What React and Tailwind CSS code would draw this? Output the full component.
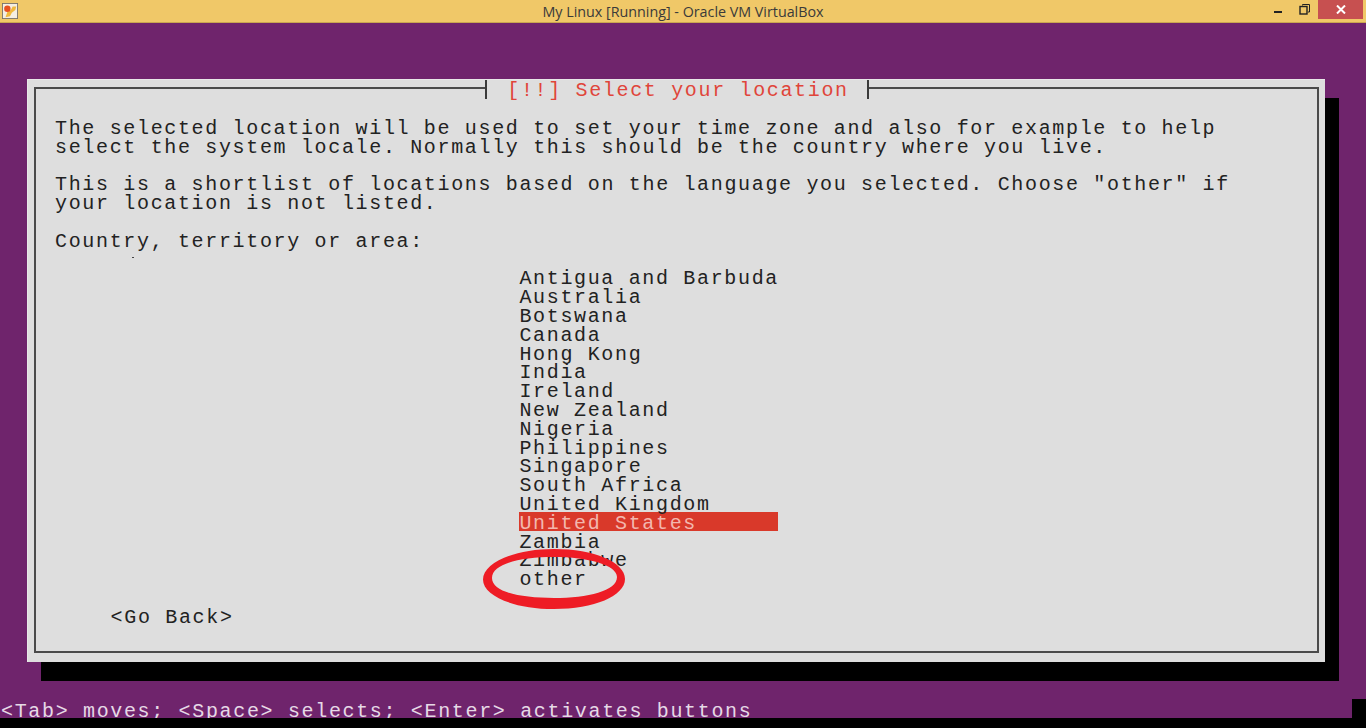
const mono = "font-['Liberation_Mono',monospace]";
const countries = ["Antigua and Barbuda","Australia","Botswana","Canada","Hong Kong","India","Ireland","New Zealand","Nigeria","Philippines","Singapore","South Africa","United Kingdom","United States","Zambia","Zimbabwe","other"];

function AppIcon() {
  return (
    <svg width="16" height="16" viewBox="0 0 18 18" className="mt-[3px]">
      <rect x="0.5" y="0.5" width="17" height="17" fill="#f4eee2" stroke="#77716a" />
      <path d="M4 16 L6 10 L10 8 L12 4 L16 4 L15 8 L11 11 L9 15 Z" fill="#f0b93c" />
      <circle cx="6" cy="6.5" r="3.6" fill="#e8501f" />
    </svg>
  );
}

export default function App() {
  return (
    <div className={`w-[1366px] h-[728px] overflow-hidden flex flex-col bg-[#6f246c] relative ${mono} text-[20px] leading-[18.8px] tracking-[1.66px]`}>
      <header className="h-[23px] shrink-0 bg-[#f0c868] border-b border-[#c9a650] flex tracking-normal">
        <div className="w-[98px] pl-[2px]"><AppIcon /></div>
        <div className="flex-1 text-center font-['Open_Sans',sans-serif] text-[14.3px] leading-[23px] text-[#3a3a3a]">My Linux [Running] - Oracle VM VirtualBox</div>
        <div className="flex w-[95px] mr-[3px] h-[19px]">
          <div className="w-[20px] flex items-start justify-center">
            <div className="w-[8px] h-[2px] mt-[11px] bg-[#222]" />
          </div>
          <svg width="12" height="12" viewBox="0 0 12 12" className="mt-[3px] ml-[11px] mr-[7px]">
            <path d="M3.5 2.5V1.5H10.5V9H9" fill="none" stroke="#222" />
            <rect x="1" y="3.5" width="7" height="7.5" fill="none" stroke="#222" strokeWidth="1.4" />
          </svg>
          <div className="w-[45px] bg-[#c75050] flex items-center justify-center">
            <svg width="10" height="9" viewBox="0 0 10 9"><path d="M1 0.5L9 8.5M9 0.5L1 8.5" stroke="#fff" strokeWidth="2" /></svg>
          </div>
        </div>
      </header>

      <main className="flex-1 pt-[56px] pl-[27px] flex flex-col">
        <section className="w-[1298px] h-[583px] bg-[#dedede] shadow-[14px_19px_0_#000] border-t border-l border-[#e8e8e8] pt-[7px] pr-[6px] pb-[9px] pl-[6px] flex relative">
          <div className="flex-1 border-2 border-[#4a4a4a] pl-[19px] pt-[31px] text-[#222] whitespace-pre">
            <div>The selected location will be used to set your time zone and also for example to help</div>
            <div>select the system locale. Normally this should be the country where you live.</div>
            <div className="mt-[18.8px]">This is a shortlist of locations based on the language you selected. Choose "other" if</div>
            <div>your location is not listed.</div>
            <div className="mt-[18.8px]">Country, territory or area:</div>
            <ul className="mt-[15.8px] ml-[464.4px] w-[259px]">
              {countries.map((c) => (
                <li key={c} className={c === "United States" ? "bg-[#d9392a] text-[#f3b7ae]" : ""}>
                  <span className="relative top-[3px]">{c}</span>
                </li>
              ))}
            </ul>
            <div className="mt-[21.8px] ml-[55.6px]">&lt;Go Back&gt;</div>
          </div>
          <div className="absolute left-[457px] top-0 w-[384px] h-[19px] bg-[#dedede] border-x-2 border-[#3a3a3a] text-center text-[#e0453a] pt-[2px] pl-[2px] whitespace-pre">[!!] Select your location</div>
          <div className="absolute left-[104px] top-[177px] w-[2px] h-[1px] bg-[#444]" />
        </section>
      </main>

      <footer className="h-[29px] shrink-0 bg-black">
        <div className="h-[19px] flex">
          <div className="flex-1 bg-[#6f246c] text-[#e6d9e6] whitespace-pre leading-[26px] pl-[1px] overflow-hidden">&lt;Tab&gt; moves; &lt;Space&gt; selects; &lt;Enter&gt; activates buttons</div>
          <div className="w-[14px]" />
        </div>
      </footer>

      <svg width="150" height="68" viewBox="0 0 150 68" className="absolute left-[480px] top-[545px]">
        <path fillRule="evenodd" fill="#ee1c25" d="M3 34.5C3 18 34 4 74 4C114 4 145 17 145 34C145 51 114 64 74 64C34 64 3 51 3 34.5ZM12 33C12 47 40 53 74 53C108 53 137 46 137 32C137 20 108 12 74 12C40 12 12 19 12 33Z" />
      </svg>
    </div>
  );
}
